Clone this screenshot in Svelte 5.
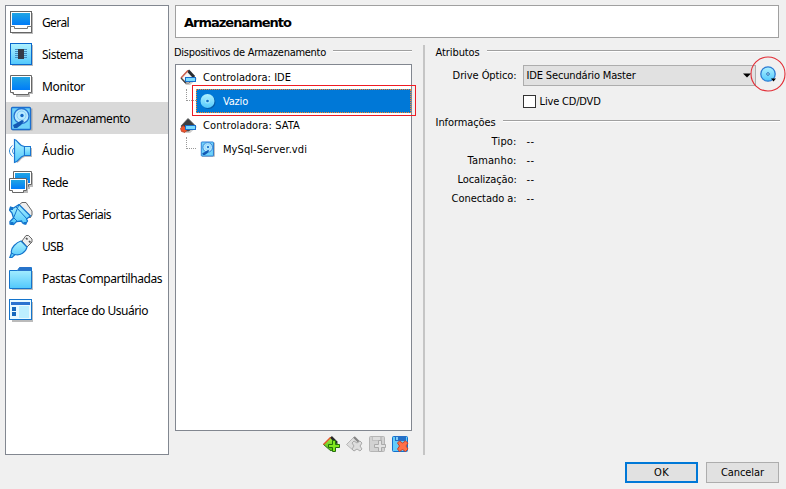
<script>
  const sections = [
    { label: 'Geral', icon: 'general', w: 27 },
    { label: 'Sistema', icon: 'system', w: 41 },
    { label: 'Monitor', icon: 'display', w: 43 },
    { label: 'Armazenamento', icon: 'disk', w: 88, active: true },
    { label: 'Áudio', icon: 'audio', w: 32 },
    { label: 'Rede', icon: 'network', w: 26 },
    { label: 'Portas Seriais', icon: 'serial', w: 69 },
    { label: 'USB', icon: 'usb', w: 21 },
    { label: 'Pastas Compartilhadas', icon: 'folder', w: 120 },
    { label: 'Interface do Usuário', icon: 'ui', w: 106 }
  ];
  const info = [
    { label: 'Tipo:', w: 25 },
    { label: 'Tamanho:', w: 49 },
    { label: 'Localização:', w: 59 },
    { label: 'Conectado a:', w: 65 }
  ];

  // Spreads the letters so that the label takes up the given width.
  function fit(node, width) {
    const n = [...node.textContent].length;
    const natural = node.getBoundingClientRect().width;
    node.style.letterSpacing = (width - natural) / n + 'px';
  }
</script>

{#snippet monitor()}
  <path d="M3 3h21v17h-3v3H7v-3H3z" fill="#bbb" />
  <path d="M1.500 1.500h21v17h-3v2h-15v-2h-3z" fill="#fff" stroke="#666" />
  <path d="M3 3h18v13H3z" fill="url(#screen)" />
{/snippet}

{#snippet hdd()}
  <rect x="3.500" y="2.500" width="20" height="22" fill="#aaa" />
  <rect x="2.500" y="1.500" width="19" height="22" rx="1" fill="#6fd2fa" stroke="#1b6fd0" stroke-width="1.300" />
  <circle cx="12.500" cy="10" r="7.500" fill="#b8eaff" stroke="#2674d2" stroke-width="1.300" />
  <circle cx="12.500" cy="9.500" r="4.500" fill="none" stroke="#86cdf5" />
  <circle cx="13" cy="9.500" r="1.700" fill="#1266c4" />
  <path d="M4 19l4-2 5-3 2 1-3 4-4 3H5z" fill="#1259b4" />
{/snippet}

{#snippet controller(sata)}
  <path d="M2 10L9 2l8 8-7 6H6z" fill="#aaa" opacity=".6" />
  <path d="M1 9L8 1.500 15 8.500l-6 5.500H5z" fill={sata ? '#3d3f42' : '#f4f4f4'} stroke="#555" stroke-width=".8" />
  {#if sata}
    <path d="M.5 11.500l2.500-3 5 3.500-3 3.500-3.500-1z" fill="#f0552d" stroke="#a83a25" stroke-width=".7" />
  {:else}
    <path d="M8 1.500l6 6.500" stroke="#292c31" stroke-width="3" />
    <path d="M1 9L8 1.500" stroke="#d0614d" stroke-width="1.500" />
    <path d="M1 9l5 5" stroke="#444" stroke-width="1.300" />
  {/if}
  <rect x="5.500" y="8.500" width="10" height="4" fill="#7bdcff" stroke="#176fcd" />
{/snippet}

<svg width="0" height="0" class="defs">
  <linearGradient id="screen" x2="0" y2="1"><stop stop-color="#20a5e4" /><stop offset="1" stop-color="#007cf8" /></linearGradient>
  <linearGradient id="aqua" x2="0" y2="1"><stop stop-color="#b0f2ff" /><stop offset="1" stop-color="#51c8fc" /></linearGradient>
  <linearGradient id="green" x2="0" y2="1"><stop stop-color="#a6ef45" /><stop offset="1" stop-color="#4ebd10" /></linearGradient>
</svg>

<div class="dialog">
  <nav>
    {#each sections as s}
      <div class="section" class:active={s.active}>
        <svg width="26" height="26" viewBox="0 0 26 26">
          {#if s.icon === 'general'}
            <rect x="3" y="3" width="21" height="21" fill="#bbb" />
            <rect x="1.500" y="1.500" width="21" height="21" fill="#fff" stroke="#666" />
            <path d="M3 3h18v12H3z" fill="url(#screen)" />
            <path d="M1.500 16.500h4v2h13v-2h4" fill="none" stroke="#777" />
          {:else if s.icon === 'system'}
            <rect x="3" y="3" width="21" height="21" fill="#bbb" />
            <rect x="1.500" y="1.500" width="21" height="21" fill="url(#aqua)" stroke="#0968cc" />
            <path d="M6 7.500h12M6 9.500h12M6 11.500h12M6 13.500h12M6 15.500h12" stroke="#438bc0" />
            <path d="M9 7h6v10H9z" fill="#353b46" />
          {:else if s.icon === 'display'}
            {@render monitor()}
          {:else if s.icon === 'disk'}
            {@render hdd()}
          {:else if s.icon === 'audio'}
            <path d="M7 3c2 1 4 6 9 7h7v9h-7c-4 1-5 5-8 6z" fill="#bbb" />
            <path d="M5.500 1.500C9 2 9 7.500 15.500 8.500v9C10 18.500 10 23.500 5.500 24.500z" fill="url(#aqua)" stroke="#1976d1" stroke-width="1.200" />
            <rect x="15.500" y="8.500" width="6" height="9" fill="url(#aqua)" stroke="#1976d1" />
            <path d="M3.500 7.500c-4 3-4 8 0 11M5 10c-2 2-2 4 0 6" fill="none" stroke="#2d8ad7" />
          {:else if s.icon === 'network'}
            <path d="M6 3h18v14h-3v2H6z" fill="#bbb" />
            <path d="M4.500 1.500h18v13h-3v2h-15z" fill="#fff" stroke="#666" />
            <path d="M6 3h15v10H6z" fill="url(#screen)" />
            <path d="M2 10h17v13H5z" fill="#bbb" />
            <path d="M.5 8.500h17v12h-3v2h-11v-2h-3z" fill="#fff" stroke="#666" />
            <path d="M2 10h14v9H2z" fill="url(#screen)" />
          {:else if s.icon === 'serial'}
            <path d="M10 3l3-2.500h4L23 9v4l-2 3z" fill="#eee" stroke="#666" />
            <path d="M1.500 5l3 1L10 2.500 21.500 14l-4 3 1 2-2 3-3-1-1-2-5 .5-3 3L1 22v-2.500L4.500 16 3 11 .5 8z" fill="url(#aqua)" stroke="#1474cc" stroke-width="1.300" />
            <path d="M7 5L18 17M4.500 16L10 2.500M8 19l-4-4" fill="none" stroke="#1474cc" />
            <path d="M1 5h3v3H1zM1.500 20h3v3h-3zM14.500 20h3v2.500h-3z" fill="#1474cc" />
          {:else if s.icon === 'usb'}
            <path d="M13 7l4-5.500h2.500L23 5v3l-5 5z" fill="#eee" stroke="#666" />
            <path d="M17 4l1.500 1.500M20 7l1.500 1.500" stroke="#555" stroke-width="1.700" />
            <path d="M.8 23.500l1.700-4.500C1 14 8 8 12 7l6 6c-1 5-7 9-12 7.500l-3 3z" fill="url(#aqua)" stroke="#1474cc" stroke-width="1.200" />
            <path d="M2.500 19l3.500 2" stroke="#1474cc" />
          {:else if s.icon === 'folder'}
            <path d="M3 5h21v19H3z" fill="#bbb" />
            <path d="M.5 4.500h8l2-3h12v21H.5z" fill="url(#aqua)" stroke="#1474cc" />
            <path d="M8 5l3-4h11v4z" fill="#2873ca" />
          {:else}
            <rect x="3" y="4" width="21" height="20" fill="#bbb" />
            <rect x=".5" y="1.500" width="22" height="20" fill="#e9faff" stroke="#1474cc" />
            <path d="M2 4h19v3H2z" fill="#2b73d0" />
            <path d="M3 9h4v4H3zm0 5h4v4H3z" fill="#1668bc" />
            <path d="M10 8h10v12H10z" fill="#bdefff" />
          {/if}
        </svg>
        <span use:fit={s.w}>{s.label}</span>
      </div>
    {/each}
  </nav>

  <main>
    <header><span use:fit={107}>Armazenamento</span></header>
    <div class="columns">
      <section class="devices">
        <div class="caption"><span use:fit={152}>Dispositivos de Armazenamento</span><i></i></div>
        <div class="tree">
          <div class="row">
            <svg width="18" height="16" viewBox="0 0 18 16">{@render controller(false)}</svg>
            <span use:fit={88}>Controladora: IDE</span>
          </div>
          <div class="row child">
            <i class="branch"></i>
            <div class="selected">
              <svg width="16" height="16" viewBox="0 0 16 16">
                <circle cx="8.500" cy="9" r="7" fill="#075ba7" /><circle cx="7.500" cy="8" r="7" fill="url(#aqua)" /><circle cx="7.500" cy="8" r="2.500" fill="#9de8ff" /><circle cx="7.500" cy="8" r="1.300" fill="#126dc3" />
              </svg>
              <span use:fit={25}>Vazio</span>
            </div>
            <b class="mark"></b>
          </div>
          <div class="row">
            <svg width="18" height="16" viewBox="0 0 18 16">{@render controller(true)}</svg>
            <span use:fit={97}>Controladora: SATA</span>
          </div>
          <div class="row child">
            <i class="branch"></i>
            <div class="leaf">
              <svg width="16" height="16" viewBox="1 0 24 25">{@render hdd()}</svg>
              <span use:fit={84}>MySql-Server.vdi</span>
            </div>
          </div>
        </div>
        <div class="tools">
          <svg width="17" height="17" viewBox="0 0 17 17">
            <path d="M.5 8.500L8 1l7 7.500L8 15z" fill="url(#green)" stroke="#32751f" />
            <path d="M8 1l6 6" stroke="#27292b" stroke-width="2.500" /><path d="M.5 8.500L7.500 1.500" stroke="#e4532c" stroke-width="1.400" />
            <path d="M9.500 4.500h3v4h4v3h-4v4h-3v-4h-4v-3h4z" fill="#82e91f" stroke="#24700d" />
          </svg>
          <svg width="17" height="17" viewBox="0 0 17 17">
            <path d="M.5 8.500L8 1l7 7.500L8 15z" fill="#ddd" stroke="#b6b6b6" /><path d="M8 1l6 6" stroke="#858585" stroke-width="2.200" />
            <path d="M6 7l2-2 3 2 3-2 2 2-2 3 2 3-2 2-3-2-3 2-2-2 2-3z" fill="#ddd" stroke="#aaa" />
          </svg>
          <svg width="17" height="17" viewBox="0 0 17 17">
            <rect x=".5" y=".5" width="15" height="15" rx="1" fill="#d2d2d2" stroke="#b5b5b5" /><path d="M3 1h10v4H3z" fill="#c0c0c0" /><path d="M4 1h7v3H4z" fill="#ddd" />
            <path d="M9.500 4.500h3v4h4v3h-4v4h-3v-4h-4v-3h4z" fill="#e2e2e2" stroke="#aaa" />
          </svg>
          <svg width="17" height="17" viewBox="0 0 17 17">
            <rect x=".5" y=".5" width="15" height="15" rx="1" fill="#65cdf9" stroke="#1471ce" /><path d="M3 0h11v5H3z" fill="#2470c8" /><path d="M4 1h2v3H4z" fill="#82cdf8" />
            <path d="M5.500 7l2-2 3 2 3-2 2.500 2-2 3 2 3-2.500 2.500-3-2-3 2-2-2.500 2-3z" fill="#ff7048" stroke="#c6432c" />
          </svg>
        </div>
      </section>

      <div class="splitter"></div>

      <section class="details">
        <div class="caption"><span use:fit={44}>Atributos</span><i></i></div>
        <div class="drive">
          <label for="drive"><span use:fit={64}>Drive Óptico:</span></label>
          <div class="combo" id="drive">
            <span use:fit={109}>IDE Secundário Master</span>
            <svg width="8" height="5" viewBox="0 0 8 5"><path d="M0 .5h8L4 4.500z" /></svg>
          </div>
          <div class="disc">
            <svg width="36" height="36" viewBox="0 0 36 36">
              <circle cx="18" cy="18" r="7.200" fill="url(#aqua)" stroke="#2c7bd2" stroke-width="1.300" />
              <circle cx="18" cy="18" r="1.300" fill="#d8f6ff" stroke="#236db5" />
              <path d="M21 22.500h5l-2.500 3z" />
              <circle cx="18" cy="18" r="17" fill="none" stroke="#e22c35" stroke-width="1.100" />
            </svg>
          </div>
        </div>
        <div class="live"><i></i><span use:fit={61}>Live CD/DVD</span></div>
        <div class="caption second"><span use:fit={60}>Informações</span><i></i></div>
        <div class="info">
          {#each info as r}
            <div><p><span use:fit={r.w}>{r.label}</span></p><em use:fit={8}>--</em></div>
          {/each}
        </div>
      </section>
    </div>
    <footer>
      <button class="ok"><span use:fit={15}>OK</span></button>
      <button><span use:fit={43}>Cancelar</span></button>
    </footer>
  </main>
</div>

<style>
  :global(body) { background: #f0f0f0; overflow: hidden; }
  .defs { position: absolute; }
  .dialog {
    box-sizing: border-box; width: 786px; height: 489px; padding: 5px 6px 5px 5px;
    display: flex; gap: 6px; color: #000; background: #f0f0f0;
    font: 11px/14px "DejaVu Sans Condensed", "DejaVu Sans", sans-serif; font-stretch: condensed;
  }
  span, em { white-space: nowrap; font-style: normal; flex: none; }
  svg { flex: none; display: block; }
  nav {
    box-sizing: border-box; width: 164px; height: 450px; border: 1px solid #828790; background: #fff;
    font: 12px/16px "Noto Sans", "Open Sans", sans-serif;
  }
  .section { box-sizing: border-box; height: 32px; display: flex; align-items: center; padding: 2px 0 0 3px; gap: 7px; }
  .active { background: #d9d9d9; }
  main { width: 605px; display: flex; flex-direction: column; }
  header {
    box-sizing: border-box; height: 33px; margin-right: 1px; border: 1px solid #a0a0a0; background: #fff;
    padding: 9px 0 0 8px; font: bold 13px/15px "DejaVu Sans", sans-serif; font-stretch: normal;
  }
  .columns { display: flex; height: 412px; padding-top: 5px; margin-top: 2px; box-sizing: border-box; }
  .devices { width: 237px; }
  .caption { display: flex; height: 14px; margin-left: -1px; gap: 7px; }
  .caption span { padding-top: 1px; }
  .caption i { flex: 1; height: 1px; margin-top: 5px; background: #a0a0a0; border-bottom: 1px solid #fff; }
  .tree { box-sizing: border-box; height: 367px; margin-top: 5px; border: 1px solid #828790; background: #fff; }
  .row { height: 24px; display: flex; align-items: center; padding-left: 4px; gap: 5px; }
  .row span, .drive span { padding-top: 2px; }
  .child { position: relative; padding-left: 10px; gap: 0; }
  .branch { width: 10px; height: 12px; align-self: flex-start; border-left: 1px dotted #999; border-bottom: 1px dotted #999; box-sizing: border-box; }
  .selected, .leaf { flex: 1; display: flex; align-items: center; gap: 7px; height: 24px; box-sizing: border-box; padding-left: 4px; }
  .selected { background: #0078d7; border: 1px dotted #ff8728; color: #fff; padding-left: 3px; }
  .mark { position: absolute; left: 16px; top: -4px; width: 222px; height: 29px; border: 1px solid #ed1c24; }
  .tools { display: flex; justify-content: flex-end; gap: 6px; padding: 5px 3px 0 0; }
  .splitter { width: 2px; height: 410px; margin: 0 1px 0 11px; background: #c5c5c5; }
  .details { width: 344px; margin-left: 11px; }
  .drive { display: flex; height: 20px; margin-top: 6px; align-items: center; }
  label, .info p { width: 80px; text-align: right; margin: 0; flex: none; }
  label { padding-top: 2px; }
  .combo {
    box-sizing: border-box; width: 233px; height: 21px; margin-left: 6px; border: 1px solid #adadad;
    background: #e1e1e1; display: flex; align-items: center; justify-content: space-between; padding: 0 4px 0 3px;
  }
  .disc { width: 24px; display: flex; margin-left: -6px; padding-bottom: 2px; }
  .live { display: flex; align-items: center; height: 14px; margin: 9px 0 0 86px; gap: 4px; }
  .live span { padding-top: 1px; }
  .live i { box-sizing: border-box; width: 13px; height: 13px; border: 1px solid #333; background: #fff; }
  .second { margin-top: 7px; }
  .info { padding-top: 3px; }
  .info div { display: flex; height: 19px; align-items: center; gap: 10px; }
  footer { display: flex; justify-content: flex-end; gap: 8px; padding: 10px 1px 0 0; }
  button {
    box-sizing: border-box; width: 73px; height: 21px; margin: 0; padding: 0; border: 1px solid #adadad;
    background: #e1e1e1; font: inherit; font-stretch: condensed; color: #000;
  }
  .ok { border: 2px solid #0078d7; }
</style>
